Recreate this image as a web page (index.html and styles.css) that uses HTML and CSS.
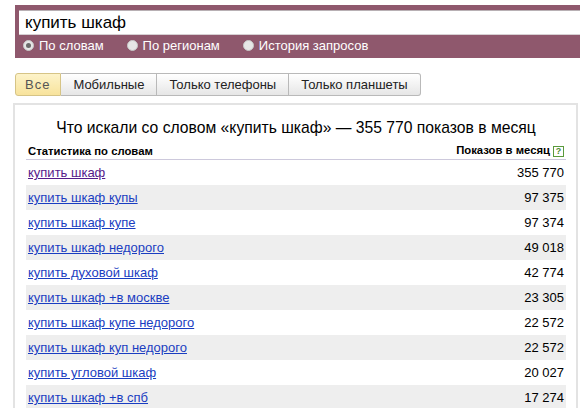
FILE: index.html
```html
<!DOCTYPE html>
<html lang="ru">
<head>
  <meta charset="UTF-8" />
  <title>Подбор слов</title>
  <link rel="stylesheet" href="styles.css">
</head>
<body>
  <div class="search">
    <div class="search-input">купить шкаф</div>
    <div class="modes">
      <label class="mode"><span class="radio checked"></span>По словам</label>
      <label class="mode"><span class="radio"></span>По регионам</label>
      <label class="mode"><span class="radio"></span>История запросов</label>
    </div>
  </div>

  <div class="tabs">
    <span class="tab active">Все</span>
    <span class="tab">Мобильные</span>
    <span class="tab">Только телефоны</span>
    <span class="tab">Только планшеты</span>
  </div>

  <div class="panel">
    <h2 class="panel-title">Что искали со словом «купить шкаф» — 355 770 показов в месяц</h2>
    <table class="stats">
      <thead>
        <tr>
          <th class="col-word">Статистика по словам</th>
          <th class="col-count">Показов в месяц<span class="help">?</span></th>
        </tr>
      </thead>
      <tbody id="rows"></tbody>
    </table>
  </div>

  <script>
    const rows = [
      ["купить шкаф", "355 770"],
      ["купить шкаф купы", "97 375"],
      ["купить шкаф купе", "97 374"],
      ["купить шкаф недорого", "49 018"],
      ["купить духовой шкаф", "42 774"],
      ["купить шкаф +в москве", "23 305"],
      ["купить шкаф купе недорого", "22 572"],
      ["купить шкаф куп недорого", "22 572"],
      ["купить угловой шкаф", "20 027"],
      ["купить шкаф +в спб", "17 274"]
    ];

    const body = document.getElementById("rows");
    rows.forEach(([word, count], i) => {
      const tr = document.createElement("tr");
      const visited = i === 0 ? " visited" : "";
      tr.innerHTML = `<td class="col-word"><a href="#" class="word${visited}">${word}</a></td>` +
                     `<td class="col-count">${count}</td>`;
      body.appendChild(tr);
    });
  </script>
</body>
</html>
```

FILE: styles.css
```css
body {
  margin: 0;
  font-family: Arial, "Liberation Sans", sans-serif;
  font-size: 13px;
  color: #000;
  background: #fff;
}

.search {
  margin: 5px 0 0 15px;
  height: 53px;
  padding: 5px 0 0 4px;
  box-sizing: border-box;
  background: #8f586d;
}

.search-input {
  height: 25px;
  box-sizing: border-box;
  padding: 1px 0 0 6px;
  background: #fff;
  border-top: 1px solid #b8b0b4;
  border-bottom: 1px solid #d6d0d3;
  font-size: 17px;
  line-height: 21px;
}

.modes {
  display: flex;
  gap: 23px;
  padding: 3px 0 0 4px;
  color: #fff;
  font-size: 13px;
  line-height: 15px;
}

.mode {
  display: flex;
  align-items: center;
  gap: 5px;
}

.radio {
  width: 9px;
  height: 9px;
  border-radius: 50%;
  background: #e6e6e6;
  border: 1px solid #c8c8c8;
  box-sizing: content-box;
  position: relative;
}

.radio.checked::after {
  content: "";
  position: absolute;
  left: 2px;
  top: 2px;
  width: 5px;
  height: 5px;
  border-radius: 50%;
  background: #6a6a6a;
}

.tabs {
  display: flex;
  margin: 15px 0 0 15px;
}

.tab {
  height: 23px;
  box-sizing: border-box;
  padding: 0 12px;
  line-height: 21px;
  font-size: 13px;
  color: #222;
  border: 1px solid #b9b9b9;
  border-left: none;
  background: linear-gradient(#ffffff, #e6e6e6);
}

.tab:first-child {
  border-left: 1px solid #b9b9b9;
  border-radius: 3px 0 0 3px;
}

.tab:last-child {
  border-radius: 0 3px 3px 0;
}

.tab.active {
  color: #555;
  padding: 0 10px 0 9px;
  letter-spacing: 1px;
  background: linear-gradient(#fdf3c9, #f8e39c);
  border-color: #d6c486;
}

.panel {
  margin: 7px 2px 0 13px;
  border: 2px solid #e3e3e3;
  border-bottom: none;
  padding: 0 10px 0 11px;
}

.panel-title {
  margin: 0;
  padding: 14px 0 0;
  height: 31px;
  box-sizing: border-box;
  text-align: center;
  font-weight: normal;
  font-size: 15.7px;
  line-height: 18px;
}

.stats {
  width: 100%;
  border-collapse: collapse;
}

.stats th {
  font-size: 11.3px;
  font-weight: bold;
  height: 21px;
  padding: 0 2px 2px;
  vertical-align: bottom;
  border-bottom: 1px solid #cdc9dc;
}

.stats td {
  height: 25px;
  padding: 0 2px;
  font-size: 13px;
}

.stats tbody tr:nth-child(even) {
  background: #eeeeee;
}

.col-word {
  text-align: left;
}

.col-count {
  text-align: right;
}

.help {
  display: inline-block;
  width: 9px;
  height: 9px;
  margin-left: 3px;
  border: 1px solid #5a9a3c;
  color: #4c8a30;
  font-size: 9px;
  line-height: 9px;
  text-align: center;
  font-weight: bold;
  vertical-align: 0;
}

.word {
  color: #1a3dc1;
}

.word.visited {
  color: #551a8b;
}
```
